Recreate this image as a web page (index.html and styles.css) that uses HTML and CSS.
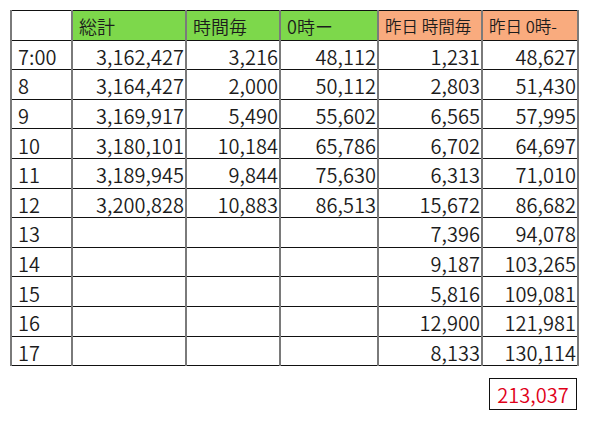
FILE: index.html
```html
<!DOCTYPE html>
<html lang="ja">
<head>
<meta charset="utf-8">
<link rel="stylesheet" href="styles.css">
</head>
<body>
<div class="page">
<table class="sheet">
  <colgroup>
    <col class="c0"><col class="c1"><col class="c2"><col class="c3"><col class="c4"><col class="c5">
  </colgroup>
  <thead>
    <tr>
      <th class="blank"></th>
      <th class="g">総計</th>
      <th class="g">時間毎</th>
      <th class="g">0時ー</th>
      <th class="o">昨日 時間毎</th>
      <th class="o">昨日 0時-</th>
    </tr>
  </thead>
  <tbody>
    <tr><td class="lbl">7:00</td><td>3,162,427</td><td>3,216</td><td>48,112</td><td>1,231</td><td>48,627</td></tr>
    <tr><td class="lbl">8</td><td>3,164,427</td><td>2,000</td><td>50,112</td><td>2,803</td><td>51,430</td></tr>
    <tr><td class="lbl">9</td><td>3,169,917</td><td>5,490</td><td>55,602</td><td>6,565</td><td>57,995</td></tr>
    <tr><td class="lbl">10</td><td>3,180,101</td><td>10,184</td><td>65,786</td><td>6,702</td><td>64,697</td></tr>
    <tr><td class="lbl">11</td><td>3,189,945</td><td>9,844</td><td>75,630</td><td>6,313</td><td>71,010</td></tr>
    <tr><td class="lbl">12</td><td>3,200,828</td><td>10,883</td><td>86,513</td><td>15,672</td><td>86,682</td></tr>
    <tr><td class="lbl">13</td><td></td><td></td><td></td><td>7,396</td><td>94,078</td></tr>
    <tr><td class="lbl">14</td><td></td><td></td><td></td><td>9,187</td><td>103,265</td></tr>
    <tr><td class="lbl">15</td><td></td><td></td><td></td><td>5,816</td><td>109,081</td></tr>
    <tr><td class="lbl">16</td><td></td><td></td><td></td><td>12,900</td><td>121,981</td></tr>
    <tr><td class="lbl">17</td><td></td><td></td><td></td><td>8,133</td><td>130,114</td></tr>
  </tbody>
</table>
<div class="total-row">
  <div class="total">213,037</div>
</div>
</div>
</body>
</html>
```

FILE: styles.css
```css
html, body {
  margin: 0;
  padding: 0;
  background: #ffffff;
}
body {
  font-family: "Noto Sans CJK JP", "Noto Sans", sans-serif;
  color: #1c1c1c;
}
.page {
  padding: 10px 0 0 10px;
  width: 567px;
}
.sheet {
  border-collapse: collapse;
  table-layout: fixed;
  width: 567px;
  border: 1px solid #111;
}
.c0 { width: 61px; }
.c1 { width: 114px; }
.c2 { width: 94px; }
.c3 { width: 98px; }
.c4 { width: 104px; }
.c5 { width: 96px; }
.sheet th, .sheet td {
  height: 29.6px;
  padding: 0;
  box-sizing: border-box;
  border-top: 1px solid #111;
  border-bottom: 1px solid #111;
  border-left: 2px solid #7a7a7a;
  border-right: 2px solid #7a7a7a;
  white-space: nowrap;
  overflow: hidden;
}
.sheet th {
  font-weight: 350;
  text-align: left;
  font-size: 18px;
  padding-left: 6px;
  padding-top: 2px;
}
.sheet th.o {
  font-size: 16.5px;
}
.sheet th.blank { background: #fff; }
.sheet th.g { background: #7dd84b; }
.sheet th.o { background: #f9ab7e; }
.sheet td {
  font-size: 20px;
  font-weight: 350;
  letter-spacing: 0.05px;
  text-align: right;
  padding-right: 1px;
  padding-top: 4px;
  line-height: 1;
}
.sheet td.lbl {
  text-align: left;
  padding-left: 6px;
  padding-right: 0;
}
.total-row {
  display: flex;
  justify-content: flex-end;
  padding-top: 12px;
}
.total {
  border: 1px solid #111;
  width: 88px;
  height: 32px;
  box-sizing: border-box;
  display: flex;
  align-items: center;
  justify-content: center;
  color: #e00018;
  font-size: 20px;
  font-weight: 350;
  padding-top: 1px;
}
```
